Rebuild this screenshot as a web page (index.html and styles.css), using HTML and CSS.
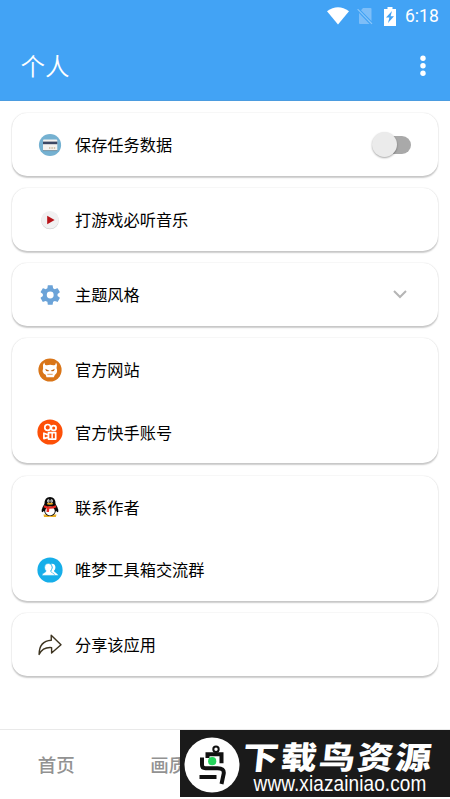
FILE: index.html
```html
<!DOCTYPE html>
<html lang="zh-CN">
<head>
<meta charset="utf-8">
<title>个人</title>
<link rel="stylesheet" href="styles.css">
</head>
<body>
<header class="header">
  <div class="status">
    <svg width="22" height="18" viewBox="0 0 22 18"><path fill="#fff" d="M0 4.3Q11-4 22 4.3L11 17.5Z"/></svg>
    <svg class="sim" width="16" height="18" viewBox="0 0 16 18"><path fill="#7dbef8" d="M6 1h7.5a1 1 0 0 1 1 1v12L4 3.2ZM2 6l10.5 11H3a1 1 0 0 1-1-1Z"/><path d="M.6 2.2 15 16.8" stroke="#8bc7fa" stroke-width="1.2"/></svg>
    <svg class="battery" width="12" height="19" viewBox="0 0 12 19"><path fill="#fff" d="M3.5 0h5v2H12v17H0V2h3.5Z"/><path fill="#42a3f5" d="M8 4 2 10.6h3.4L4 16l6-6.7H6.6Z"/></svg>
    <span class="clock">6:18</span>
  </div>
  <div class="appbar">
    <h1>个人</h1>
    <svg width="6" height="22" viewBox="0 0 6 22" fill="#fff"><circle cx="3" cy="3.2" r="2.7"/><circle cx="3" cy="10.8" r="2.7"/><circle cx="3" cy="18.3" r="2.7"/></svg>
  </div>
</header>
<main class="list">
  <section class="card">
    <div class="row">
      <svg class="icon" viewBox="0 0 26 26"><circle cx="13" cy="13" r="11.1" fill="#75b1d1"/><rect x="6" y="7.5" width="14.3" height="11.5" rx="1" fill="#f4f2ef"/><path fill="#3c4763" d="M6 9.6h14.3v2.6H6Z"/><path d="M6 18.6h14.3" stroke="#58798e" stroke-width=".8"/><path d="M12 16h7" stroke="#c5b69c" stroke-dasharray="1.4 1" stroke-width="1.4"/></svg>
      <span class="label">保存任务数据</span><span class="switch"></span>
    </div>
  </section>
  <section class="card">
    <div class="row">
      <svg class="icon" viewBox="0 0 26 26"><circle cx="13" cy="13.5" r="8.8" fill="#d2d2d2"/><circle cx="13" cy="12.8" r="8.8" fill="#f1f1f2"/><path fill="#b81218" d="M10.2 8.8v8.4l7.4-4.2Z"/></svg>
      <span class="label">打游戏必听音乐</span>
    </div>
  </section>
  <section class="card">
    <div class="row">
      <svg class="icon" viewBox="0 0 26 26"><g transform="translate(1.4 1.2) scale(.985)"><path fill="#6ba3d8" d="M19.43 12.98c.04-.32.07-.64.07-.98s-.03-.66-.07-.98l2.11-1.65c.19-.15.24-.42.12-.64l-2-3.46c-.12-.22-.39-.3-.61-.22l-2.49 1c-.52-.4-1.08-.73-1.69-.98l-.38-2.65C14.46 2.18 14.25 2 14 2h-4c-.25 0-.46.18-.49.42l-.38 2.65c-.61.25-1.17.59-1.69.98l-2.49-1c-.23-.09-.49 0-.61.22l-2 3.46c-.13.22-.07.49.12.64l2.11 1.65c-.04.32-.07.65-.07.98s.03.66.07.98l-2.11 1.65c-.19.15-.24.42-.12.64l2 3.46c.12.22.39.3.61.22l2.49-1c.52.4 1.08.73 1.69.98l.38 2.65c.03.24.24.42.49.42h4c.25 0 .46-.18.49-.42l.38-2.65c.61-.25 1.17-.59 1.69-.98l2.49 1c.23.09.49 0 .61-.22l2-3.46c.12-.22.07-.49-.12-.64l-2.11-1.65ZM12 15.5a3.5 3.5 0 1 1 0-7 3.5 3.5 0 0 1 0 7Z"/></g></svg>
      <span class="label">主题风格</span>
      <svg class="chevron" width="14" height="9" viewBox="0 0 14 9"><path d="m1 1 6 6 6-6" fill="none" stroke="#b5b5b5" stroke-width="2"/></svg>
    </div>
  </section>
  <section class="card">
    <div class="row">
      <svg class="icon" viewBox="0 0 26 26"><circle cx="13" cy="13" r="11.6" fill="#d97518"/><path fill="#fff" d="M7.2 5.5q.5 2.8 2.6 2.7 3.5-1 6.6 0 2.3.2 2.7-2.7 1.8 3 .4 5.5 1.9 4.5-1.7 6.9l-1 2.3H9.5l-.8-2.4q-4.2-2-2.6-6.4-1.2-3 1.1-5.9Z"/><path d="m8.2 11.7 4.2 2.1q-3.5 1.8-4.2-2.1Zm9.6 0-4.2 2.1q3.6 1.8 4.2-2.1Z" fill="#c56a19"/><path d="M10.3 17.3h5.4" stroke="#d97518" stroke-width=".7"/></svg>
      <span class="label">官方网站</span>
    </div>
    <div class="row">
      <svg class="icon" viewBox="0 0 26 26"><circle cx="13" cy="13" r="12.6" fill="#fd5008"/><g fill="none" stroke="#fff" stroke-width="1.7"><circle cx="10.7" cy="8.4" r="2.9"/><circle cx="16.7" cy="9" r="2.4"/><path stroke-linejoin="round" d="M11.5 13.7h7.2v6.4h-7.2ZM11.5 16l-4.6-1.8v5.4l4.6-1.5"/></g><path fill="#fff" d="M14.4 14h1.5v5.5h-1.5Z"/></svg>
      <span class="label">官方快手账号</span>
    </div>
  </section>
  <section class="card">
    <div class="row">
      <svg class="icon" viewBox="0 0 26 26"><path fill="#e9ae23" d="M6.5 20.5h6l.5 2.5H7Zm7 0h6l-.7 2.5H13Z"/><path fill="#080808" d="M7.4 10Q7.5 3 13 3t5.6 7q3.4 5 2.6 7.8-.7 1-2.2-1-1.2 5.2-6 5.2t-6-5.2q-1.5 2-2.2 1Q4 15 7.4 10Z"/><ellipse cx="13" cy="17" rx="4.8" ry="4.4" fill="#fff"/><path fill="#e82c24" d="M7.3 11.2q5.7 2.8 11.4 0l.7 2.1q-3 1.6-7.1 1.5l-.3 3.3H9.5l.2-3.6-3.2-1.2Z"/><ellipse cx="11.4" cy="7" rx="1.2" ry="1.7" fill="#fff"/><ellipse cx="14.6" cy="7" rx="1.2" ry="1.7" fill="#fff"/><circle cx="11.8" cy="7" r=".6"/><circle cx="14.3" cy="7" r=".6"/><ellipse cx="13" cy="9.7" rx="3.2" ry="1" fill="#e9a923"/></svg>
      <span class="label">联系作者</span>
    </div>
    <div class="row">
      <svg class="icon" viewBox="0 0 26 26"><circle cx="13" cy="13" r="12.6" fill="#16aee9"/><g fill="#fff"><path d="M14.4 6.7q4.1-.3 4 4-.1 2-1.4 3.1.2 1.3 1.8 2l2.6 2.4h-4.2q-.4-1.8-3-3-.6-.5 0-1.2 2.8-4-.1-7Z"/><path stroke="#16aee9" stroke-width=".5" d="M11.3 6.4q3.7 0 3.7 4 0 2.1-1.4 3.4 0 1.3 1.7 2 2.3.7 2.4 2.6H5q.1-1.9 2.3-2.6 1.7-.7 1.7-2-1.4-1.3-1.4-3.4 0-4 3.7-4Z"/></g></svg>
      <span class="label">唯梦工具箱交流群</span>
    </div>
  </section>
  <section class="card">
    <div class="row">
      <svg class="icon" viewBox="0 0 26 26"><path d="M14.2 3.3 24 12.8l-9.4 8.3v-5.5Q6 14.8 2.1 22.4q.1-13.5 12.2-14.2Z" fill="none" stroke="#3d3420" stroke-width="1.4" stroke-linejoin="round"/></svg>
      <span class="label">分享该应用</span>
    </div>
  </section>
</main>
<nav class="tabs"><span>首页</span><span>画质</span></nav>
<aside class="banner">
  <svg width="56" height="56" viewBox="0 0 56 56"><circle cx="28" cy="28" r="27.5" fill="#fff"/><g fill="none" stroke="#111" stroke-width="4"><path d="M23.5 21v-3.8h14v9M18 20.5V28q0 3.2 3.5 3.2h12q7 0 6.2 5.5L37.5 47M15.5 40h17"/><circle cx="32" cy="12.3" r="2.7" stroke-width="2"/></g><circle cx="28.2" cy="24.2" r="4.1" fill="#26d45c"/></svg>
  <div class="brand"><div class="name">下载鸟资源</div><div class="url">www.xiazainiao.com</div></div>
</aside>
</body>
</html>
```
FILE: styles.css
```css
* { box-sizing: border-box; }
body {
  margin: 0;
  height: 799px;
  display: flex;
  flex-direction: column;
  position: relative;
  overflow: hidden;
  background: #fff;
  color: #000;
  font-family: Roboto, "Noto Sans CJK SC", sans-serif;
}
svg { display: block; flex: none; }
.header { height: 101px; background: #42a3f5; border-bottom: 1px solid #4b9ce0; color: #fff; }
.status { height: 32px; padding: 0 10px 0 0; display: flex; align-items: center; justify-content: flex-end; }
.sim { margin-left: 8px; }
.battery { margin-left: 11px; }
.clock { width: 35px; margin-left: 9px; font-size: 17.5px; white-space: nowrap; }
.appbar { height: 68px; padding: 0 24.5px 0 20.5px; display: flex; align-items: center; justify-content: space-between; }
h1 { margin: 0; padding-top: 3px; font-size: 24.5px; font-weight: 350; line-height: 36px; }
.list { flex: 1; padding: 12px 12px 0; display: flex; flex-direction: column; gap: 12.5px; }
.card { border-radius: 15px; background: #fff; box-shadow: 0 1.5px 1.5px rgba(0,0,0,.2), 0 0 1.5px rgba(0,0,0,.14); }
.row { height: 62.5px; padding: 1px 26px 0 25px; display: flex; align-items: center; }
.icon { width: 26px; height: 26px; }
.label { margin-left: 12px; padding-top: 3px; font-size: 16.2px; line-height: 24px; flex: 1; white-space: nowrap; }
.switch { width: 33px; height: 18px; margin-right: 1px; border-radius: 9px; background: #a9a9a9; position: relative; }
.switch::before { content: ""; position: absolute; left: -6.5px; top: -4px; width: 25px; height: 25px; border-radius: 50%; background: #ebebeb; box-shadow: 0 1px 2px rgba(0,0,0,.35); }
.chevron { margin-right: 5px; }
.tabs { height: 70px; padding-bottom: 2px; border-top: 1px solid #e9e9e9; display: grid; grid-template-columns: repeat(4, 112.5px); align-items: center; text-align: center; font-size: 18.5px; font-weight: 500; color: #929292; }
.banner { position: absolute; left: 180px; top: 730px; width: 270px; height: 67px; background: #1a1a1a; color: #fff; display: flex; align-items: center; padding: 2px 0 0 4px; }
.brand { width: 196px; margin-left: 2px; padding-top: 2px; display: flex; flex-direction: column; align-items: center; }
.name { font: 900 36px/36px "Noto Sans CJK SC", sans-serif; letter-spacing: 2.2px; margin-right: 2px; transform: skewX(-6deg) scaleY(.87); white-space: nowrap; }
.url { font: 19px/21px "Liberation Sans", sans-serif; letter-spacing: .1px; transform: scaleY(1.12); }
```
